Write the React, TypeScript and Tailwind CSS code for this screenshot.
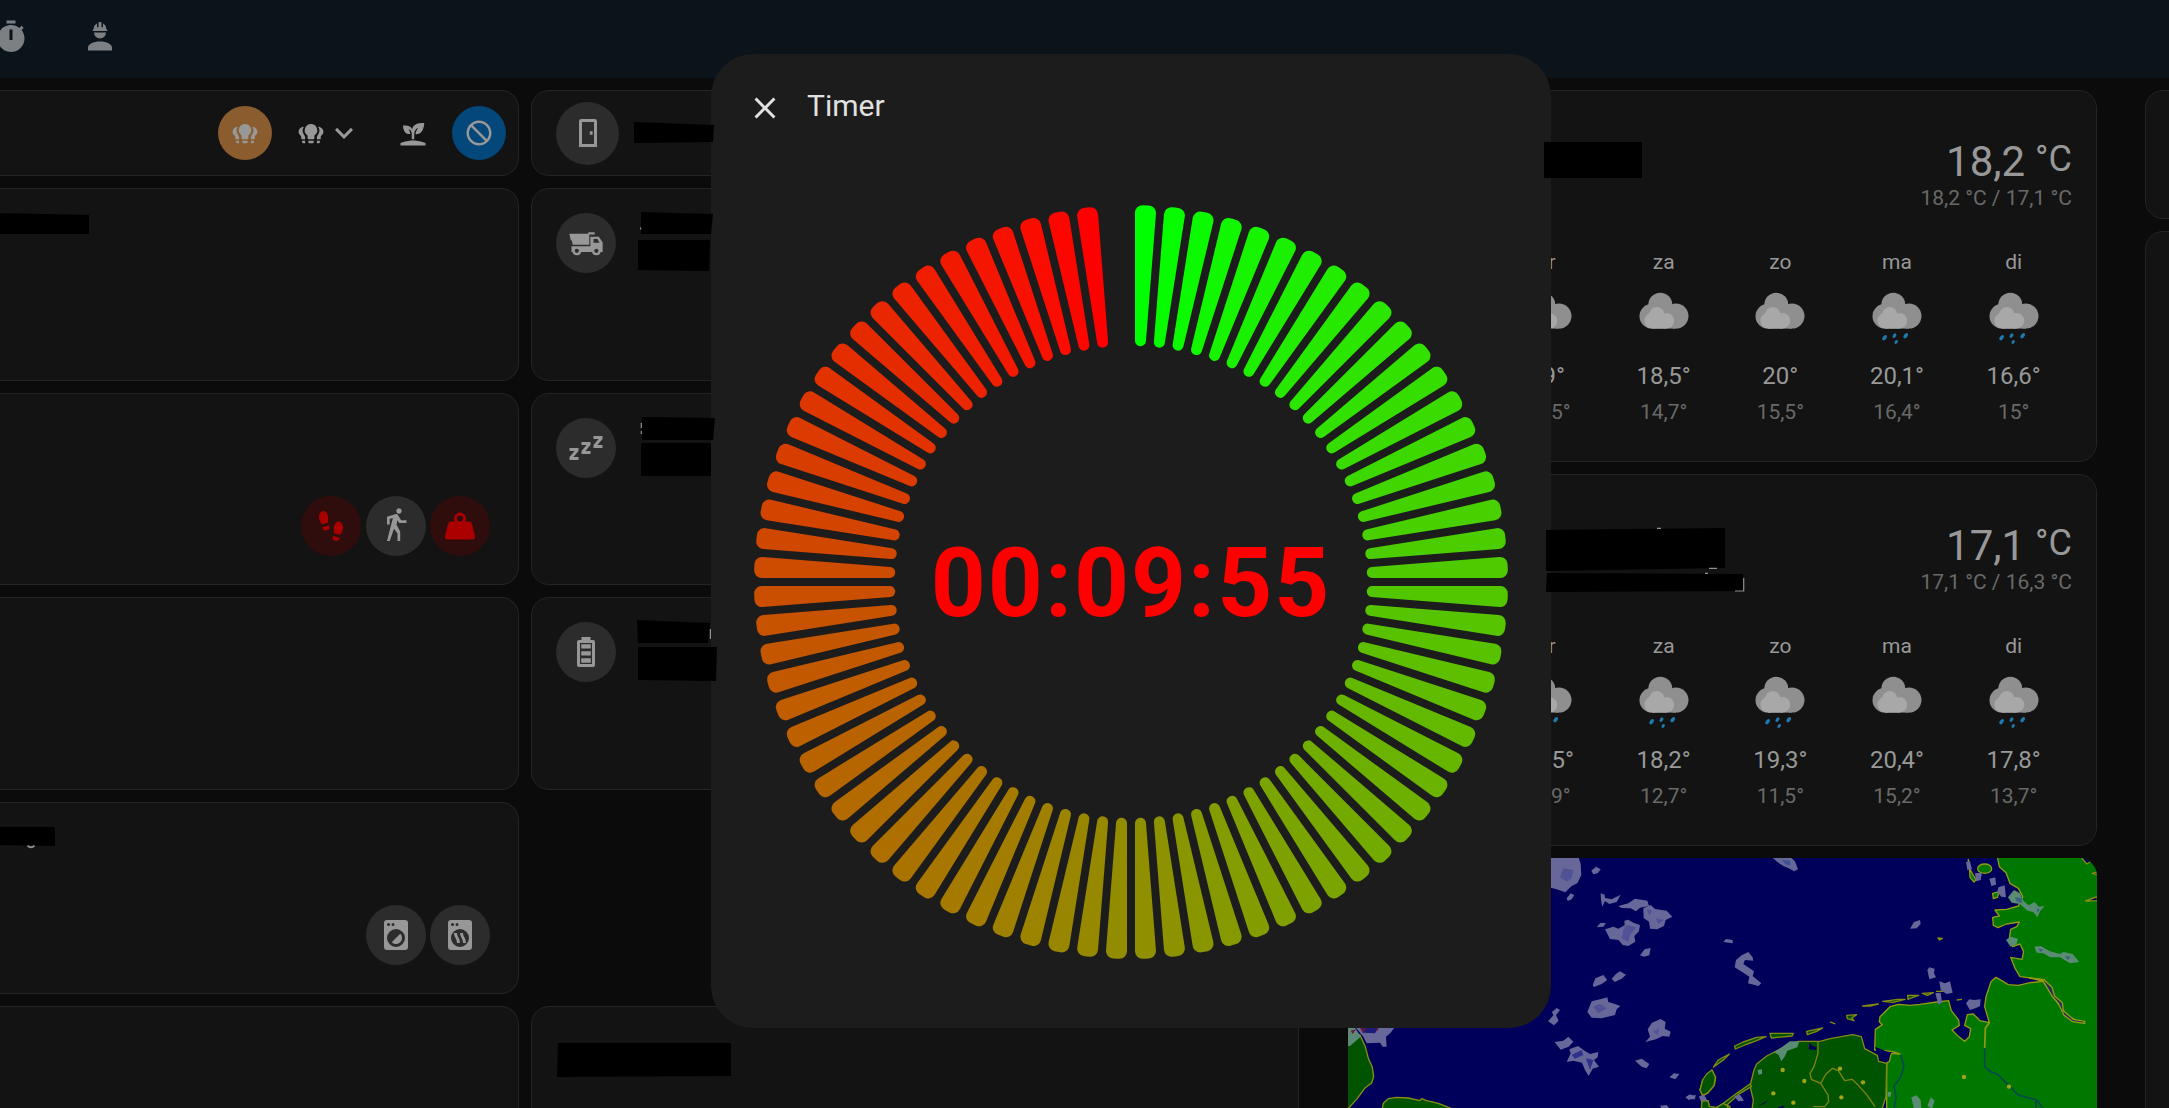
import React from "react";

type IconProps = { d: string; className?: string };

const Icon = ({ d, className = "size-9" }: IconProps) => (
  <svg viewBox="0 0 24 24" className={`${className} shrink-0 fill-current`} fillRule="evenodd">
    <path d={d} />
  </svg>
);

const ICONS = {
  timer:
    "M19.03 7.39L20.45 5.97C20 5.46 19.55 5 19.04 4.56L17.62 6C16.07 4.74 14.12 4 12 4C7.03 4 3 8.03 3 13S7.03 22 12 22C17 22 21 17.97 21 13C21 10.88 20.26 8.93 19.03 7.39M13 14H11V7H13V14M15 1H9V3H15V1Z",
  hardHat:
    "M12,15C7.58,15 4,16.79 4,19V21H20V19C20,16.79 16.42,15 12,15M8,9A4,4 0 0,0 12,13A4,4 0 0,0 16,9M11.5,2C11.2,2 11,2.21 11,2.5V5.5H10V3C10,3 7.75,3.86 7.75,6.75C7.75,6.75 7,6.89 7,8H17C16.95,6.89 16.25,6.75 16.25,6.75C16.25,3.86 14,3 14,3V5.5H13V2.5C13,2.21 12.81,2 12.5,2H11.5Z",
  bulbs:
    "M12 4.8a5 5 0 0 0-2.7 9.2V16.2a.8.8 0 0 0 .8.8h3.8a.8.8 0 0 0 .8-.8V14A5 5 0 0 0 12 4.8M9.9 18.2h4.2v1.2a.8.8 0 0 1-.8.8h-2.6a.8.8 0 0 1-.8-.8zM5.4 7C3.2 7.8 2.1 9.3 2.1 11.2C2.1 13.4 4.2 13.8 4.2 15.2V16.3a.7.7 0 0 0 .7.7H7.3V15.4C7.3 13.9 5.6 13 5.3 10.8C5.1 9.3 5.4 8.2 6.3 7.1ZM4.9 18.2h2.4v2h-1.5a.9.9 0 0 1-.9-.9zM18.6 7C20.8 7.8 21.9 9.3 21.9 11.2C21.9 13.4 19.8 13.8 19.8 15.2V16.3a.7.7 0 0 1-.7.7H16.7V15.4C16.7 13.9 18.4 13 18.7 10.8C18.9 9.3 18.6 8.2 17.7 7.1ZM19.1 18.2h-2.4v2h1.5a.9.9 0 0 0 .9-.9z",
  chevron: "M7.41,8.58L12,13.17L16.59,8.58L18,10L12,16L6,10L7.41,8.58Z",
  sprout:
    "M2,22V20C2,20 7,18 12,18C17,18 22,20 22,20V22H2M11.3,9.1C10.1,5.2 4,6.1 4,6.1C4,6.1 4.2,13.9 9.9,12.7C9.5,9.8 8,9 8,9C10.8,9 11,12.4 11,12.4V17C11.3,17 11.7,17 12,17C12.3,17 12.7,17 13,17V12.8C13,12.8 13,8.9 16,7.9C16,7.9 14,10.9 14,12.9C21,13.6 21,4 21,4C21,4 12.1,3 11.3,9.1Z",
  cancel:
    "M12 2C17.5 2 22 6.5 22 12S17.5 22 12 22 2 17.5 2 12 6.5 2 12 2M12 4C10.1 4 8.4 4.6 7.1 5.7L18.3 16.9C19.3 15.5 20 13.8 20 12C20 7.6 16.4 4 12 4M16.9 18.3L5.7 7.1C4.6 8.4 4 10.1 4 12C4 16.4 7.6 20 12 20C13.9 20 15.6 19.4 16.9 18.3Z",
  door: "M6 4.2A1.6 1.6 0 0 1 7.6 2.6H16.4A1.6 1.6 0 0 1 18 4.2V21.4H6ZM8 4.6V19.4H16V4.6ZM13.2 10.9H15.1V13.1H13.2Z",
  truck:
    "M.9 5.8H13.5V4.9H17.8V6.3H14.2V13.2H3.1L2.6 10.4H1.9ZM14.9 13.2V7.8H20.6L23.1 11.6V18H21.8A3 3 0 0 1 16 18H8.8A3 3 0 0 1 3 18H2.3V14.1H14.9ZM17 9.4V11.8H21L19.6 9.4ZM5.9 15.8A1.4 1.4 0 1 0 5.9 18.6A1.4 1.4 0 1 0 5.9 15.8ZM18.9 15.8A1.4 1.4 0 1 0 18.9 18.6A1.4 1.4 0 1 0 18.9 15.8Z",
  sleep:
    "M23,12H17V10L20.39,6H17V4H23V6L19.62,10H23V12M15,16H9V14L12.39,10H9V8H15V10L11.62,14H15V16M7,20H1V18L4.39,14H1V12H7V14L3.62,18H7V20Z",
  battery:
    "M9 2H15V4H16.7A1.3 1.3 0 0 1 18 5.3V20.7A1.3 1.3 0 0 1 16.7 22H7.3A1.3 1.3 0 0 1 6 20.7V5.3A1.3 1.3 0 0 1 7.3 4H9ZM8 6V20H16V6ZM8.8 6.8H15.2V9.7H8.8ZM8.8 11.5H15.2V14.4H8.8ZM8.8 16.2H15.2V19.1H8.8Z",
  shoes:
    "M10.74,11.72C11.21,12.95 11.16,14.23 9.75,14.74C6.85,15.81 6.2,13 6.16,12.86L10.74,11.72M5.71,10.91L10.03,9.84C9.84,8.79 10.13,7.74 10.13,6.5C10.13,4.82 8.8,1.53 6.68,2.06C4.26,2.66 3.91,5.35 4,6.65C4.12,7.95 5.64,10.73 5.71,10.91M17.85,19.85C17.82,20 17.16,22.8 14.26,21.74C12.86,21.22 12.8,19.94 13.27,18.71L17.85,19.85M20,13.65C20.1,12.35 19.76,9.65 17.33,9.05C15.22,8.5 13.89,11.81 13.89,13.5C13.89,14.73 14.17,15.78 14,16.83L18.3,17.9C18.38,17.72 19.89,14.94 20,13.65Z",
  walk:
    "M14.12,10H19V8.2H15.38L13.38,4.87C13.08,4.37 12.54,4.03 11.92,4.03C11.74,4.03 11.58,4.06 11.42,4.11L6,5.8V11H7.8V7.33L9.91,6.67L6,22H7.8L10.67,13.89L13,17V22H14.8V15.59L12.31,11.05L13.04,8.18M14,3.8C15,3.8 15.8,3 15.8,2C15.8,1 15,0.2 14,0.2C13,0.2 12.2,1 12.2,2C12.2,3 13,3.8 14,3.8Z",
  weight:
    "M12,3A4,4 0 0,1 16,7C16,7.73 15.81,8.41 15.46,9H18C18.95,9 19.75,9.67 19.95,10.56C21.96,18.57 22,18.78 22,19A2,2 0 0,1 20,21H4A2,2 0 0,1 2,19C2,18.78 2.04,18.57 4.05,10.56C4.25,9.67 5.05,9 6,9H8.54C8.19,8.41 8,7.73 8,7A4,4 0 0,1 12,3M12,5A2,2 0 0,0 10,7A2,2 0 0,0 12,9A2,2 0 0,0 14,7A2,2 0 0,0 12,5Z",
  washer:
    "M14.83,11.17C16.39,12.73 16.39,15.27 14.83,16.83C13.27,18.39 10.73,18.39 9.17,16.83L14.83,11.17M6,2H18A2,2 0 0,1 20,4V20A2,2 0 0,1 18,22H6A2,2 0 0,1 4,20V4A2,2 0 0,1 6,2M7,4A1,1 0 0,0 6,5A1,1 0 0,0 7,6A1,1 0 0,0 8,5A1,1 0 0,0 7,4M10,4A1,1 0 0,0 9,5A1,1 0 0,0 10,6A1,1 0 0,0 11,5A1,1 0 0,0 10,4M12,8A6,6 0 0,0 6,14A6,6 0 0,0 12,20A6,6 0 0,0 18,14A6,6 0 0,0 12,8Z",
  dryer:
    "M6,2H18A2,2 0 0,1 20,4V20A2,2 0 0,1 18,22H6A2,2 0 0,1 4,20V4A2,2 0 0,1 6,2M7,4A1,1 0 0,0 6,5A1,1 0 0,0 7,6A1,1 0 0,0 8,5A1,1 0 0,0 7,4M10,4A1,1 0 0,0 9,5A1,1 0 0,0 10,6A1,1 0 0,0 11,5A1,1 0 0,0 10,4M12,8A6,6 0 0,0 6,14A6,6 0 0,0 12,20A6,6 0 0,0 18,14A6,6 0 0,0 12,8ZM8 10.6H10C9.9 13 12 13.8 11.9 17.4H10C10 14 8 13.6 8 10.6ZM12.1 10.6H14C13.9 13 16 13.8 15.9 17.4H14C14.1 14 12 13.6 12.1 10.6Z",
  close:
    "M19,6.41L17.59,5L12,10.59L6.41,5L5,6.41L10.59,12L5,17.59L6.41,19L12,13.41L17.59,19L19,17.59L13.41,12L19,6.41Z",
};

const Card = ({ className = "", children }: { className?: string; children?: React.ReactNode }) => (
  <section className={`shrink-0 border border-[#242424] bg-[#131313] ${className}`}>{children}</section>
);

const Bubble = ({ d, tone = "bg-[#2c2c2c] text-[#979797]" }: { d: string; tone?: string }) => (
  <div className={`flex size-[60px] shrink-0 items-center justify-center rounded-full ${tone}`}>
    <Icon d={d} />
  </div>
);

const RED = "bg-[#300d0d] text-[#ab0000]";

type Day = { day: string; rain: boolean; high: string; low: string };

const Cloud = ({ rain }: { rain: boolean }) => (
  <svg viewBox="0 0 72 72" className="h-[72px] w-[72px]">
    <g fill="#8f8f8f">
      <circle cx="32.3" cy="22.8" r="12" />
      <circle cx="23.9" cy="34.2" r="12.4" />
      <circle cx="48" cy="34.1" r="12.5" />
      <rect x="24" y="26" width="24" height="20.6" />
    </g>
    <g fill="#a8a8a8">
      <circle cx="28.8" cy="32.4" r="7.4" />
      <circle cx="24.4" cy="38.6" r="8" />
      <circle cx="38.4" cy="38.8" r="7.8" />
      <rect x="24.4" y="34" width="14" height="12.6" />
    </g>
    {rain && (
      <g fill="#1f7ab0">
        <ellipse cx="23.6" cy="55.7" rx="1.8" ry="2.9" transform="rotate(35 23.6 55.7)" />
        <ellipse cx="33.5" cy="53.7" rx="1.6" ry="2.5" transform="rotate(35 33.5 53.7)" />
        <ellipse cx="44.7" cy="53.7" rx="1.8" ry="2.9" transform="rotate(35 44.7 53.7)" />
        <ellipse cx="35.2" cy="60" rx="1.5" ry="2.1" transform="rotate(35 35.2 60)" />
      </g>
    )}
  </svg>
);

const Weather = ({ temp, range, days }: { temp: string; range: string; days: Day[] }) => (
  <Card className="flex h-[372px] w-[749px] flex-col rounded-[18px] pt-[45px] pr-6 pl-[23px] text-[#989898]">
    <div className="flex flex-col items-end">
      <div className="flex h-[52px] items-center text-[42px] leading-[52px]">
        <span>{temp}</span>
        <span className="-mt-[7px] ml-[10px] text-[36px] leading-9">°C</span>
      </div>
      <div className="-mt-px h-[22px] text-[21px] leading-[22px] whitespace-pre text-[#696969]">{range}</div>
    </div>
    <div className="mt-[41px] grid grid-cols-6">
      {days.map((d) => (
        <div key={d.day} className="flex flex-col items-center">
          <div className="h-6 text-[21px] leading-6">{d.day}</div>
          <div className="mt-2">
            <Cloud rain={d.rain} />
          </div>
          <div className="mt-[8px] h-[28px] text-[24px] leading-[28px]">{d.high}</div>
          <div className="mt-[10px] h-6 text-[21px] leading-6 text-[#696969]">{d.low}</div>
        </div>
      ))}
    </div>
  </Card>
);

const WEEK_A: Day[] = [
  { day: "do", rain: false, high: "18°", low: "14°" },
  { day: "vr", rain: false, high: "19°", low: "14,5°" },
  { day: "za", rain: false, high: "18,5°", low: "14,7°" },
  { day: "zo", rain: false, high: "20°", low: "15,5°" },
  { day: "ma", rain: true, high: "20,1°", low: "16,4°" },
  { day: "di", rain: true, high: "16,6°", low: "15°" },
];

const WEEK_B: Day[] = [
  { day: "do", rain: false, high: "17°", low: "13°" },
  { day: "vr", rain: true, high: "18,5°", low: "13,9°" },
  { day: "za", rain: true, high: "18,2°", low: "12,7°" },
  { day: "zo", rain: true, high: "19,3°", low: "11,5°" },
  { day: "ma", rain: false, high: "20,4°", low: "15,2°" },
  { day: "di", rain: true, high: "17,8°", low: "13,7°" },
];

const RadarMap = () => (
  <svg viewBox="1348 858 749 250" className="h-[250px] w-[749px] shrink-0 rounded-tr-[18px]">
    <rect x="1348" y="858" width="749" height="250" fill="#00005a" />
    <g transform="translate(1300 840) scale(.33333)">
      <g fill="#005400" stroke="#8a8f10" strokeWidth="4" strokeLinejoin="round">
        <path d="M120 560 180 585 196 620 205 655 217 682 221 710 215 729 196 743 172 775 150 800 120 830Z" />
        <path d="M245 815 250 790 265 776 290 772 325 774 360 782 365 776 380 782 415 790 455 806Z" />
        <path d="M1236 690 1247 712 1243 736 1225 758 1208 768 1200 750 1208 720 1222 705Z" />
        <path d="M1203 820 1206 784 1224 782 1228 800 1250 804 1270 790 1290 800V820Z" />
      </g>
      <g fill="#67679a">
        <path d="M740 40H832L842 72 844 105 832 130 815 138 796 157 770 148 740 140Z" />
        <path d="M874 92 888 80 902 88 893 100 880 103ZM800 175 812 160 823 165 815 178 803 183Z" />
        <path d="M902 160 914 164 915 174 935 178 962 164 950 186 928 192 915 183 907 200 903 180Z" />
        <path d="M955 198 985 190 1005 176 1042 182 1047 198 1020 203 1008 214 992 205 965 204Z" />
        <path d="M1030 205 1052 195 1065 207 1100 212 1117 230 1097 240 1092 258 1072 268 1050 266 1047 245 1031 234Z" />
        <path d="M890 262 902 248 918 250 910 260ZM915 268 940 260 955 266 974 256 973 242 985 239 1000 248 1020 255 1017 274 1003 288 1006 305 985 318 968 315 956 300 930 297Z" />
        <path d="M1020 346 1034 328 1052 324 1048 346 1032 350ZM935 416 948 402 960 394 978 404 965 416 944 426ZM878 436 886 415 910 405 922 420 905 432 882 441Z" />
        <path d="M862 516 875 484 900 478 922 472 925 486 945 492 961 498 950 508 945 525 905 535 875 533Z" />
        <path d="M744 544 760 526 756 516 770 504 780 510 768 526 776 542 762 556ZM764 606 790 602 805 590 820 605 806 620 782 629Z" />
        <path d="M800 666 812 640 808 628 834 618 856 634 870 642 895 636 893 652 882 660 897 680 878 686 866 708 855 690 846 668 820 662Z" />
        <path d="M1036 606 1050 590 1043 568 1056 548 1082 537 1097 546 1094 566 1112 575 1108 590 1088 588 1068 598Z" />
        <path d="M1005 662 1025 656 1048 672 1040 685 1025 680ZM1108 712 1122 700 1138 702 1126 718ZM1156 772 1170 763 1186 771 1166 780ZM1197 770 1216 770 1222 782 1206 790ZM1080 797 1100 795 1108 806H1085Z" />
        <path d="M165 560H285L272 578 258 590 260 620 248 620 240 608 200 610 190 590Z" />
      </g>
      <g fill="#33338f" opacity=".4">
        <path d="M790 85 820 90 815 115 800 125 780 112ZM980 255 1008 262 990 285 985 305 965 295 970 270ZM1068 235 1092 240 1075 252ZM1040 208 1056 212 1048 226ZM880 500 900 492 920 505 895 520ZM1060 575 1078 565 1072 585Z" />
      </g>
      <path d="M815 645 845 630 850 645 825 656ZM858 655 880 660 870 690Z" fill="#22228a" opacity=".8" />
      <path d="M180 563H235L225 580 190 578Z" fill="#1c1c78" />
      <path d="M141 563H165L182 590 150 618H141Z" fill="#5c8a78" />
      <path d="M182 565 198 565 188 580ZM226 565 236 568 230 574ZM152 572 168 568 158 582Z" fill="#701438" />
    </g>
    <g transform="translate(1690 840) scale(.33333)">
      <g fill="#007800" stroke="#959a10" strokeWidth="4" strokeLinejoin="round">
        <path d="M920 40 928 80 948 98 960 130 985 145 998 170 985 198 950 208 915 210 928 228 908 232 910 256 924 263 950 252 988 246 980 260 962 268 958 296 968 320 990 312 1001 335 996 358 962 352 975 385 990 410 1040 416 1063 420 1100 480 1116 510 1150 540 1185 549 1160 542 1130 525 1095 478 1060 424 1020 428 985 436 955 434 935 422 918 412 903 425 888 470 884 500 898 548 870 542 850 522 832 524 824 556 842 566 838 590 824 604 804 588 786 570 808 556 806 540 784 512 776 482 740 486 690 493 660 496 625 493 600 500 570 530 568 545 577 554 556 568 554 630 605 634 630 642 604 640 598 665 590 668V830H1260V40Z" />
        <ellipse cx="884" cy="86" rx="21" ry="14" />
        <path d="M835 58V80L842 92 858 120 852 126 840 112 838 78ZM908 160 928 155 922 172 910 176Z" />
      </g>
      <path d="M1172 50 1190 72 1203 64 1195 50ZM1222 170 1186 183 1222 182ZM1206 100 1222 96V104Z" fill="#00005a" stroke="#8a8f10" strokeWidth="4" />
      <path d="M556 620 560 640 590 668 602 640Z" fill="#00005a" />
      <path
        d="M1018 414 1063 420 1086 442 1094 468 1117 488 1120 512 1150 538 1184 544 1182 550 1148 545 1122 526 1106 492 1086 468 1060 424Z"
        fill="#20305a"
        stroke="#959a10"
        strokeWidth="4"
        strokeLinejoin="round"
      />
      <path d="M898 548 886 565 884 625" fill="none" stroke="#959a10" strokeWidth="5" />
      <path d="M884 625V680L900 694 925 705 960 740 985 765 1040 780 1060 806M632 645 642 680 630 715 612 738 618 770 612 810M1038 780V804" fill="none" stroke="#00494e" strokeWidth="5" strokeLinejoin="round" />
      <g fill="#005400" stroke="#858a10" strokeWidth="4" strokeLinejoin="round">
        <path d="M186 810 190 780 180 738 192 690 200 672 230 648 290 618 325 604H390L420 596 488 584 514 590 524 626 562 646 566 664 590 670 588 770 575 810Z" />
        <path d="M134 618 160 606 200 592 228 590 200 602 165 615 136 627ZM240 580 310 580 306 588 244 594ZM350 574 398 564 380 574 352 584ZM70 682 85 660 118 642 100 660ZM470 526 500 524 485 534 492 542 472 536ZM518 498 565 492 540 498ZM578 484 624 478 645 478 610 487ZM653 466 686 466 664 474 654 478ZM697 460 730 458 712 466ZM738 454H762M420 546 436 552M800 480 816 478M744 294 757 295 749 300Z" />
        <path d="M66 690 76 712 72 736 54 758 38 766 30 750 38 720 50 702ZM100 790 140 760 180 732 184 740 150 760 110 796ZM34 810 36 784 54 782 58 800 80 802 100 790 114 800 110 812Z" />
      </g>
      <path d="M384 606 384 640 372 680 360 700 364 718 392 730 408 702 428 685 445 692 464 722 486 718 505 736 530 764 555 800M392 730 414 765 416 785 404 800 370 800" fill="none" stroke="#7f8410" strokeWidth="4" strokeLinejoin="round" />
      <path d="M358 608 370 618 380 622 378 630 356 628ZM205 798 235 780 222 792ZM262 802 285 796 278 806Z" fill="#00005a" />
      <g fill="#a0a414">
        <circle cx="278" cy="690" r="6.5" /><circle cx="450" cy="686" r="6.5" /><circle cx="343" cy="723" r="6.5" />
        <circle cx="519" cy="727" r="6.5" /><circle cx="250" cy="760" r="6.5" /><circle cx="454" cy="772" r="6.5" />
        <circle cx="310" cy="788" r="6.5" /><circle cx="822" cy="711" r="6.5" /><circle cx="957" cy="740" r="6.5" />
      </g>
      <g fill="#67679a">
        <path d="M244 50H300L315 64 324 88 312 94 295 84 280 78 262 66ZM100 306 108 297 128 300 128 310ZM138 360 155 346 175 336 188 352 190 362 165 360 160 372 192 394 188 408 214 430 205 438 174 430 178 410 160 398 134 382Z" />
        <path d="M660 266 672 246 690 240 692 252 680 265ZM712 390 718 382 734 386 732 400 738 412 718 418ZM748 424 765 430 780 424 788 458 770 462 752 450ZM736 460 752 458 756 488 745 494ZM828 490 838 478 852 480 872 478 870 498 858 504 840 510Z" />
        <path d="M828 66 840 64 846 88 832 90ZM855 100 876 98 872 120 858 124ZM898 116 916 112 918 134 904 138ZM925 142 944 136 948 172 934 170 922 156ZM0 766 18 766 14 778H0ZM28 768 44 766 46 782H32ZM132 768 150 764 162 782 145 784Z" />
      </g>
      <g fill="#5a8c74">
        <path d="M954 172 972 150 990 160 1000 182 1016 196 1034 186 1046 200 1064 198 1050 214 1042 232 1030 216 1012 212 990 192 965 188ZM948 300 962 290 984 296 980 312 962 320ZM1033 320 1052 318 1080 334 1110 342 1120 336 1148 342 1168 366 1140 370 1110 352 1080 352 1060 340 1040 338Z" />
        <path d="M252 636 275 622 300 604 328 604 322 622 292 632 284 650 274 664 266 645ZM202 690 216 688 216 702 206 704ZM592 756 604 755 602 770H594ZM664 772 680 766 692 780 694 806H672ZM712 798 722 772 734 782 726 806Z" />
      </g>
      <path d="M276 60 300 62 302 76 288 74ZM975 172 995 174 996 190 980 184ZM1040 205 1050 208 1042 218ZM1125 348 1142 350 1134 360ZM1045 326 1060 328 1052 336Z" fill="#24458a" opacity=".6" />
    </g>
  </svg>
);

const CX = 380;
const SEGMENTS = 80;

/* Outline of one gauge bar: edges parallel to the radii with a constant gap, rounded at each corner. */
function segmentPath(index: number) {
  const outer = 377;
  const inner = 236;
  const half = 4;
  const ro = 7.5;
  const ri = 5.3;
  const a0 = (index * 2 * Math.PI) / SEGMENTS;
  const a1 = ((index + 1) * 2 * Math.PI) / SEGMENTS;
  const pt = (angle: number, r: number, side = 0) => {
    const x = CX + r * Math.sin(angle) + side * Math.cos(angle);
    const y = CX - r * Math.cos(angle) + side * Math.sin(angle);
    return `${x.toFixed(2)} ${y.toFixed(2)}`;
  };
  const to = Math.sqrt((outer - ro) ** 2 - (half + ro) ** 2);
  const ti = Math.sqrt((inner + ri) ** 2 - (half + ri) ** 2);
  const ao = Math.asin((half + ro) / (outer - ro));
  const ai = Math.asin((half + ri) / (inner + ri));
  return [
    `M${pt(a0, ti, half)}`,
    `L${pt(a0, to, half)}`,
    `A${ro} ${ro} 0 0 1 ${pt(a0 + ao, outer)}`,
    `A${outer} ${outer} 0 0 1 ${pt(a1 - ao, outer)}`,
    `A${ro} ${ro} 0 0 1 ${pt(a1, to, -half)}`,
    `L${pt(a1, ti, -half)}`,
    `A${ri} ${ri} 0 0 1 ${pt(a1 - ai, inner)}`,
    `L${pt(a0 + ai, inner)}`,
    `A${ri} ${ri} 0 0 1 ${pt(a0, ti, half)}Z`,
  ].join("");
}

function segmentColor(index: number) {
  const p = index / (SEGMENTS - 2);
  const r = Math.round(255 * Math.pow(p, 0.83));
  const g = Math.round(255 * Math.pow(1 - p, 0.83));
  return `rgb(${r},${g},0)`;
}

const Gauge = () => (
  <svg viewBox="0 0 760 760" className="size-[760px]">
    {Array.from({ length: SEGMENTS - 1 }, (_, i) => (
      <path key={i} d={segmentPath(i)} fill={segmentColor(i)} />
    ))}
  </svg>
);

const Redactions = () => (
  <svg viewBox="0 0 2169 1108" className="pointer-events-none absolute inset-0 h-[1108px] w-[2169px]">
    <path
      d="M0 213 89 215V234H0ZM634 122 714 125 713 142 634 143ZM641 212 713 214 711 234H641ZM638 240H710L709 271 638 270ZM642 417 715 418 713 440H642ZM641 443H711V476H641ZM637 620 710 623 708 643H638ZM638 647H717L716 681 638 680ZM0 827H55V846L0 845ZM558 1043H731V1076L557 1077ZM1544 142H1642V178H1544ZM1546 530 1725 528V568L1546 571ZM1547 573 1743 574V591L1546 592Z"
      fill="#000"
    />
    <g fill="none" stroke="#8f8f8f" strokeWidth="1.2">
      <path d="M27.5 845.6Q31 849 34.5 845.6" strokeWidth="2" />
      <path d="M710.4 629V639M641.3 423V428M641.3 431V434M640.6 227.5V229.5" />
      <path d="M1743.7 578V591H1735M1709 568.3H1717M1657 528.4H1661M1705 573.4H1708" />
    </g>
  </svg>
);

export default function App() {
  return (
    <div className="relative flex h-[1108px] w-[2169px] flex-col overflow-hidden bg-[#0b0b0b] font-['Roboto',sans-serif]">
      <header className="flex h-[78px] shrink-0 items-center bg-[#0b141a] pb-[5px] text-[#7d8083]">
        <div className="-ml-[7px] flex items-center gap-[53px]">
          <Icon d={ICONS.timer} />
          <Icon d={ICONS.hardHat} />
        </div>
      </header>

      <main className="flex h-[1030px] shrink-0 pt-3">
        <div className="flex w-[519px] shrink-0 flex-col gap-3">
          <Card className="flex h-[86px] items-center justify-end rounded-r-[18px] border-l-0 pr-3 text-[#989898]">
            <div className="flex size-[54px] items-center justify-center rounded-full bg-[#8a5c2e]">
              <Icon d={ICONS.bulbs} className="size-[30px]" />
            </div>
            <Icon d={ICONS.bulbs} className="ml-6 size-[30px]" />
            <Icon d={ICONS.chevron} />
            <Icon d={ICONS.sprout} className="ml-9 size-[30px]" />
            <div className="ml-6 flex size-[54px] items-center justify-center rounded-full bg-[#03477b]">
              <Icon d={ICONS.cancel} className="size-[30px]" />
            </div>
          </Card>
          <Card className="h-[193px] rounded-r-[18px] border-l-0" />
          <Card className="flex h-[192px] items-end justify-end gap-[4.5px] rounded-r-[18px] border-l-0 pr-7 pb-[28px]">
            <Bubble d={ICONS.shoes} tone={RED} />
            <Bubble d={ICONS.walk} />
            <Bubble d={ICONS.weight} tone={RED} />
          </Card>
          <Card className="h-[193px] rounded-r-[18px] border-l-0" />
          <Card className="flex h-[192px] items-end justify-end gap-[4.5px] rounded-r-[18px] border-l-0 pr-7 pb-[28px]">
            <Bubble d={ICONS.washer} />
            <Bubble d={ICONS.dryer} />
          </Card>
          <Card className="h-[193px] rounded-tr-[18px] border-l-0" />
        </div>

        <div className="ml-3 flex w-[768px] shrink-0 flex-col gap-3">
          <Card className="flex h-[86px] items-center rounded-[18px] pl-6">
            <div className="flex size-[63px] items-center justify-center rounded-full bg-[#2c2c2c] text-[#979797]">
              <Icon d={ICONS.door} />
            </div>
          </Card>
          <Card className="h-[193px] rounded-[18px] pt-6 pl-6">
            <Bubble d={ICONS.truck} />
          </Card>
          <Card className="h-[192px] rounded-[18px] pt-6 pl-6">
            <Bubble d={ICONS.sleep} />
          </Card>
          <Card className="h-[193px] rounded-[18px] pt-6 pl-6">
            <Bubble d={ICONS.battery} />
          </Card>
          <Card className="mt-[204px] h-[193px] rounded-t-[18px]" />
        </div>

        <div className="ml-[49px] flex w-[749px] shrink-0 flex-col gap-3">
          <Weather temp="18,2" range="18,2 °C / 17,1 °C" days={WEEK_A} />
          <Weather temp="17,1" range="17,1 °C / 16,3 °C" days={WEEK_B} />
          <RadarMap />
        </div>

        <div className="ml-12 flex w-[200px] shrink-0 flex-col gap-3">
          <Card className="h-[129px] rounded-[18px]" />
          <Card className="h-[900px] rounded-[18px]" />
        </div>
      </main>

      <div className="absolute inset-0 pt-[54px] pl-[711px]" role="dialog" aria-label="Timer">
        <div className="flex h-[974px] w-[840px] flex-col rounded-[42px] bg-[#1c1c1c]">
          <div className="flex h-[108px] shrink-0 items-center pl-9 text-[#e1e1e1]">
            <Icon d={ICONS.close} />
            <h1 className="-mt-[5px] ml-6 text-[30px] leading-9">Timer</h1>
          </div>
          <div className="relative mt-[40px] flex shrink-0 justify-center">
            <Gauge />
            <div className="absolute inset-0 flex items-center justify-center pt-[2px] text-[96px] leading-none font-bold tracking-[2px] text-[#ff0000]">
              00:09:55
            </div>
          </div>
        </div>
      </div>

      <Redactions />
    </div>
  );
}
